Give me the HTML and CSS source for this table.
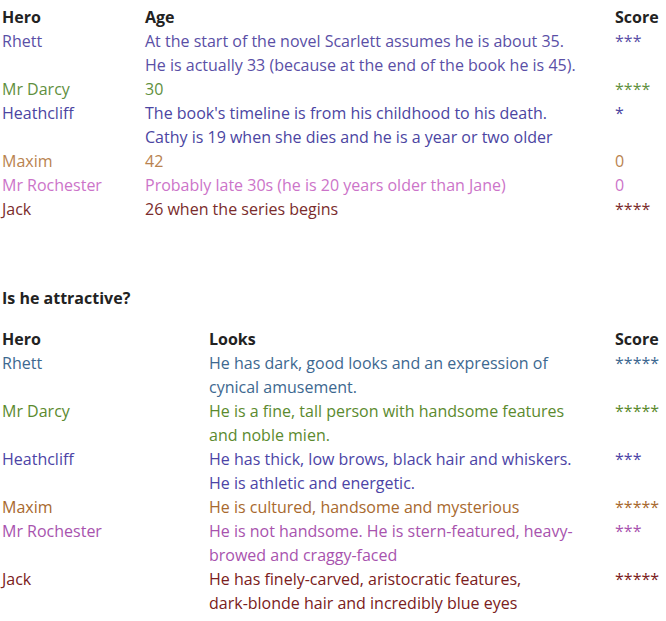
FILE: index.html
```html
<!DOCTYPE html>
<html>
<head>
<meta charset="utf-8">
<link rel="stylesheet" href="styles.css">
</head>
<body>
<div class="grid ages">
  <div class="th">Hero</div><div class="th">Age</div><div class="th">Score</div>

  <div class="c1-rhett">Rhett</div>
  <div class="c1-rhett">At the start of the novel Scarlett assumes he is about 35.<br>He is actually 33 (because at the end of the book he is 45).</div>
  <div class="c1-rhett">***</div>

  <div class="c1-darcy">Mr Darcy</div>
  <div class="c1-darcy">30</div>
  <div class="c1-darcy">****</div>

  <div class="c1-heath">Heathcliff</div>
  <div class="c1-heath">The book's timeline is from his childhood to his death.<br>Cathy is 19 when she dies and he is a year or two older</div>
  <div class="c1-heath">*</div>

  <div class="c1-maxim">Maxim</div>
  <div class="c1-maxim">42</div>
  <div class="c1-maxim">0</div>

  <div class="c1-roch">Mr Rochester</div>
  <div class="c1-roch">Probably late 30s (he is 20 years older than Jane)</div>
  <div class="c1-roch">0</div>

  <div class="c1-jack">Jack</div>
  <div class="c1-jack">26 when the series begins</div>
  <div class="c1-jack">****</div>
</div>

<h2 class="section-title">Is he attractive?</h2>

<div class="grid looks">
  <div class="th">Hero</div><div class="th">Looks</div><div class="th">Score</div>

  <div class="c2-rhett">Rhett</div>
  <div class="c2-rhett">He has dark, good looks and an expression of<br>cynical amusement.</div>
  <div class="c2-rhett">*****</div>

  <div class="c2-darcy">Mr Darcy</div>
  <div class="c2-darcy">He is a fine, tall person with handsome features<br>and noble mien.</div>
  <div class="c2-darcy">*****</div>

  <div class="c2-heath">Heathcliff</div>
  <div class="c2-heath">He has thick, low brows, black hair and whiskers.<br>He is athletic and energetic.</div>
  <div class="c2-heath">***</div>

  <div class="c2-maxim">Maxim</div>
  <div class="c2-maxim">He is cultured, handsome and mysterious</div>
  <div class="c2-maxim">*****</div>

  <div class="c2-roch">Mr Rochester</div>
  <div class="c2-roch">He is not handsome. He is stern-featured, heavy-<br>browed and craggy-faced</div>
  <div class="c2-roch">***</div>

  <div class="c2-jack">Jack</div>
  <div class="c2-jack">He has finely-carved, aristocratic features,<br>dark-blonde hair and incredibly blue eyes</div>
  <div class="c2-jack">*****</div>
</div>
</body>
</html>
```

FILE: styles.css
```css
html, body {
  margin: 0;
  background: #ffffff;
}
body {
  padding: 5px 2px 0 2px;
  font-family: "Open Sans", "DejaVu Sans", sans-serif;
  font-size: 16px;
  line-height: 24px;
  color: #222222;
}
.grid {
  display: grid;
  white-space: nowrap;
}
.ages {
  grid-template-columns: 143px 470px 1fr;
}
.looks {
  grid-template-columns: 207px 406px 1fr;
}
.th {
  font-weight: 700;
  color: #222222;
}
.section-title {
  margin: 65px 0 17px 0;
  font-size: 16px;
  line-height: 24px;
  font-weight: 700;
  color: #222222;
}

.c1-rhett { color: #5a4fa6; }
.c1-darcy { color: #5f9040; }
.c1-heath { color: #4b45a2; }
.c1-maxim { color: #b9834f; }
.c1-roch  { color: #cc74c9; }
.c1-jack  { color: #7a2c2c; }

.c2-rhett { color: #3d6890; }
.c2-darcy { color: #5b8a2e; }
.c2-heath { color: #4c44a6; }
.c2-maxim { color: #a8692e; }
.c2-roch  { color: #a853ae; }
.c2-jack  { color: #7a2020; }
```
